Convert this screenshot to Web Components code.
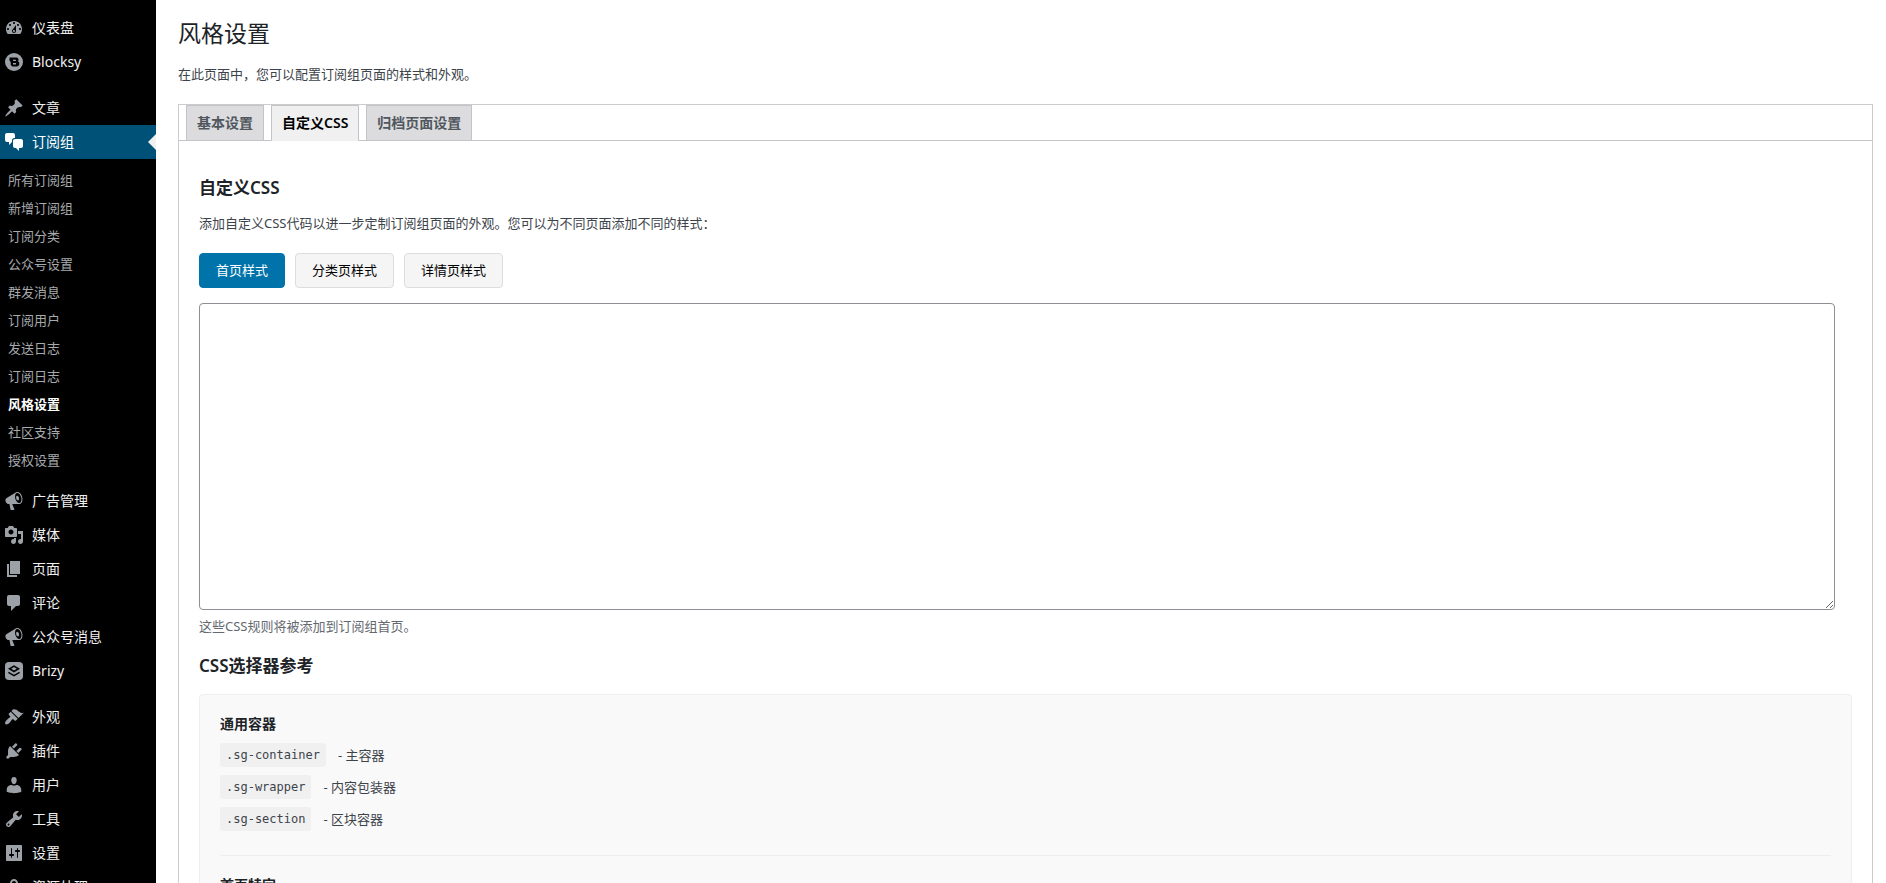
<!DOCTYPE html>
<html lang="zh-CN">
<head>
<meta charset="utf-8">
<title>风格设置</title>
<style>
  body {
    margin: 0;
    background: #fff;
    color: #3c434a;
    font: 13px/20px "Noto Sans", "Noto Sans CJK SC", sans-serif;
  }
</style>
</head>
<body>
<admin-shell>
  <admin-menu slot="menu">
    <menu-item icon="dashboard">仪表盘</menu-item>
    <menu-item icon="blocksy">Blocksy</menu-item>
    <menu-item icon="pin" separated>文章</menu-item>
    <menu-item icon="chat" current>订阅组</menu-item>
    <sub-menu>
      <sub-item>所有订阅组</sub-item>
      <sub-item>新增订阅组</sub-item>
      <sub-item>订阅分类</sub-item>
      <sub-item>公众号设置</sub-item>
      <sub-item>群发消息</sub-item>
      <sub-item>订阅用户</sub-item>
      <sub-item>发送日志</sub-item>
      <sub-item>订阅日志</sub-item>
      <sub-item current>风格设置</sub-item>
      <sub-item>社区支持</sub-item>
      <sub-item>授权设置</sub-item>
    </sub-menu>
    <menu-item icon="megaphone">广告管理</menu-item>
    <menu-item icon="media">媒体</menu-item>
    <menu-item icon="page">页面</menu-item>
    <menu-item icon="comment">评论</menu-item>
    <menu-item icon="megaphone">公众号消息</menu-item>
    <menu-item icon="brizy">Brizy</menu-item>
    <menu-item icon="brush" separated>外观</menu-item>
    <menu-item icon="plug">插件</menu-item>
    <menu-item icon="user">用户</menu-item>
    <menu-item icon="wrench">工具</menu-item>
    <menu-item icon="sliders">设置</menu-item>
    <menu-item icon="lock">资源处理</menu-item>
  </admin-menu>

  <page-header heading="风格设置">在此页面中，您可以配置订阅组页面的样式和外观。</page-header>

  <tab-panel>
    <nav-tab slot="tabs">基本设置</nav-tab>
    <nav-tab slot="tabs" current>自定义CSS</nav-tab>
    <nav-tab slot="tabs">归档页面设置</nav-tab>

    <css-editor heading="自定义CSS" hint="这些CSS规则将被添加到订阅组首页。">
      添加自定义CSS代码以进一步定制订阅组页面的外观。您可以为不同页面添加不同的样式：
      <style-button slot="buttons" current>首页样式</style-button>
      <style-button slot="buttons">分类页样式</style-button>
      <style-button slot="buttons">详情页样式</style-button>
    </css-editor>

    <selector-reference heading="CSS选择器参考">
      <selector-group heading="通用容器">
        <selector-row code=".sg-container">主容器</selector-row>
        <selector-row code=".sg-wrapper">内容包装器</selector-row>
        <selector-row code=".sg-section">区块容器</selector-row>
      </selector-group>
      <selector-group heading="首页特定"></selector-group>
    </selector-reference>
  </tab-panel>
</admin-shell>

<script>
const icons = {
  dashboard: '<path d="M3.76 16h12.48c1.1-1.37 1.76-3.11 1.76-5 0-4.42-3.58-8-8-8s-8 3.58-8 8c0 1.89.66 3.63 1.76 5zM10 4c.55 0 1 .45 1 1s-.45 1-1 1-1-.45-1-1 .45-1 1-1zM6 6c.55 0 1 .45 1 1s-.45 1-1 1-1-.45-1-1 .45-1 1-1zm8 0c.55 0 1 .45 1 1s-.45 1-1 1-1-.45-1-1 .45-1 1-1zm-5.37 5.55L12 7v6c0 1.1-.9 2-2 2s-2-.9-2-2c0-.57.24-1.08.63-1.45zM4 10c.55 0 1 .45 1 1s-.45 1-1 1-1-.45-1-1 .45-1 1-1zm12 0c.55 0 1 .45 1 1s-.45 1-1 1-1-.45-1-1 .45-1 1-1zm-5 3c0-.55-.45-1-1-1s-1 .45-1 1 .45 1 1 1 1-.45 1-1z"/>',
  blocksy: '<circle cx="10" cy="10" r="9"/><path fill="#000" fill-rule="evenodd" d="M5.500 5.500h6.700a2.300 2.300 0 0 1 1.800 3.800 2.800 2.800 0 0 1-1.300 5.200H8.300L6.700 13v-3L5.500 8.600zM9 7.700v1.400h2.900V7.700zm0 3.200v1.500h3v-1.500z"/>',
  pin: '<path d="M10.44 3.02l1.82-1.82 6.36 6.35-1.83 1.82c-1.05-.68-2.48-.57-3.41.36l-.75.75c-.92.93-1.04 2.35-.35 3.41l-1.83 1.82-2.41-2.41-2.8 2.79c-.42.42-3.38 2.71-3.8 2.29s1.86-3.39 2.28-3.81l2.79-2.79L4.1 9.36l1.83-1.82c1.05.69 2.48.57 3.4-.36l.75-.75c.93-.92 1.05-2.35.36-3.41z"/>',
  chat: '<path d="M11 6h-.82C9.07 6 8 7.2 8 8.16V10l-3 3v-3H3c-1.1 0-2-.9-2-2V3c0-1.1.9-2 2-2h6c1.1 0 2 .9 2 2v3zm0 1h6c1.1 0 2 .9 2 2v5c0 1.1-.9 2-2 2h-2v3l-3-3h-1c-1.1 0-2-.9-2-2V9c0-1.1.9-2 2-2z"/>',
  megaphone: '<path d="M18.15 5.94c.46 1.62.38 3.22-.02 4.48-.42 1.28-1.26 2.18-2.3 2.48-.16.06-.26.06-.4.06-.06.02-.12.02-.18.02-.06.02-.14.02-.22.02h-6.8l2.22 5.5c.02.14-.06.26-.14.34-.08.1-.24.16-.34.16H6.95c-.1 0-.26-.06-.34-.16-.08-.08-.16-.2-.14-.34l-1-5.5H4.25l-.02-.02c-.5.06-1.08-.18-1.54-.62s-.88-1.08-1.06-1.88c-.24-.8-.2-1.56-.02-2.2.18-.62.58-1.08 1.06-1.3l.02-.02 9-5.4c.1-.06.18-.1.24-.16.06-.04.14-.08.24-.12.16-.08.28-.12.5-.18 1.04-.3 2.24.1 3.22.98s1.84 2.24 2.26 3.86zm-2.58 5.98h-.02c.4-.1.74-.34 1.04-.7.58-.7.86-1.76.86-3.04 0-.64-.1-1.3-.28-1.98-.34-1.36-1.02-2.5-1.78-3.24s-1.68-1.1-2.46-.88c-.82.22-1.4.96-1.7 2-.32 1.04-.28 2.36.06 3.72.38 1.36 1 2.5 1.8 3.24.78.74 1.62 1.1 2.48.88zm-2.54-7.08c.22-.04.42-.02.62.04.38.16.76.48 1.02 1s.42 1.2.42 1.78c0 .3-.04.56-.12.8-.18.48-.44.84-.86.94-.34.1-.8-.06-1.14-.4s-.64-.86-.78-1.5c-.18-.62-.12-1.24.02-1.72s.48-.84.82-.94z"/>',
  media: '<path d="M13 11V4c0-.55-.45-1-1-1h-1.67L9 1H5L3.67 3H2c-.55 0-1 .45-1 1v7c0 .55.45 1 1 1h10c.55 0 1-.45 1-1zM7 4.5c1.38 0 2.5 1.12 2.5 2.5S8.38 9.5 7 9.5 4.5 8.38 4.5 7 5.62 4.5 7 4.5zM14 6h5v10.5c0 1.38-1.12 2.5-2.5 2.5S14 17.88 14 16.5s1.12-2.5 2.5-2.5c.17 0 .34.02.5.05V9h-3V6zm-4 8.05V13h2v3.5c0 1.38-1.12 2.5-2.5 2.5S7 17.88 7 16.5 8.12 14 9.5 14c.17 0 .34.02.5.05z"/>',
  page: '<path d="M6 15V2h10v13H6zm-1 1h8v2H3V5h2v11z"/>',
  comment: '<path d="M5 2h9c1.1 0 2 .9 2 2v7c0 1.1-.9 2-2 2h-2l-5 5v-5H5c-1.1 0-2-.9-2-2V4c0-1.1.9-2 2-2z"/>',
  brizy: '<rect x="1" y="1" width="18" height="18" rx="4"/><path fill="#000" fill-rule="evenodd" d="M10 4.200l6 3.600-6 3.600-6-3.600zm0 1.900L7.200 7.800 10 9.500l2.800-1.700z"/><path fill="none" stroke="#000" stroke-width="1.500" d="M4.400 11.400L10 14.700l5.600-3.300"/>',
  brush: '<path d="M14.48 11.06L7.41 3.99l1.5-1.5c.5-.56 2.3-.47 3.51.32 1.21.8 1.43 1.28 2.91 2.1 1.18.64 2.45 1.26 4.45.85zm-.71.71L6.7 4.7 4.93 6.47c-.39.39-.39 1.02 0 1.41l1.06 1.06c.39.39.39 1.03 0 1.42-.6.6-1.43 1.11-2.21 1.69-.35.26-.7.53-1.01.84C1.43 14.23.4 16.08 1.4 17.07c.99 1 2.84-.03 4.18-1.36.31-.31.58-.66.85-1.02.57-.78 1.08-1.61 1.69-2.21.39-.39 1.02-.39 1.41 0l1.06 1.06c.39.39 1.02.39 1.41 0z"/>',
  plug: '<path d="M13.11 4.36L9.87 7.6 8 5.73l3.24-3.24c.35-.34 1.05-.2 1.56.32.52.51.66 1.21.31 1.55zm-8 1.77l.91-1.12 9.01 9.01-1.19.84c-.71.71-2.63 1.16-3.82 1.16H6.14L4.9 17.26c-.59.59-1.54.59-2.12 0-.59-.58-.59-1.53 0-2.12l1.24-1.24v-3.88c0-1.13.4-3.19 1.09-3.89zm7.26 3.97l3.24-3.24c.34-.35 1.04-.21 1.55.31.52.51.66 1.21.31 1.55l-3.24 3.25z"/>',
  user: '<path d="M10 9.25c-2.27 0-2.73-3.44-2.73-3.44C7 4.02 7.82 2 9.97 2c2.16 0 2.98 2.02 2.71 3.81 0 0-.41 3.44-2.68 3.44zm0 1.6L12.72 10c2.39 0 4.52 2.33 4.52 4.53v2.49s-3.65 1.13-7.24 1.13c-3.65 0-7.24-1.13-7.24-1.13v-2.49c0-2.25 1.94-4.48 4.47-4.48z"/>',
  wrench: '<path d="M16.68 9.77c-1.34 1.34-3.3 1.67-4.95.99l-5.41 6.52c-.99.99-2.59.99-3.58 0s-.99-2.59 0-3.57l6.52-5.42c-.68-1.65-.35-3.61.99-4.95 1.28-1.28 3.12-1.62 4.72-1.06l-2.89 2.89 2.82 2.82 2.86-2.87c.53 1.58.18 3.39-1.08 4.65zM3.81 16.21c.4.39 1.04.39 1.43 0 .4-.4.4-1.04 0-1.43-.39-.4-1.03-.4-1.43 0-.39.39-.39 1.03 0 1.43z"/>',
  sliders: '<path fill-rule="evenodd" d="M18 17V3c0-.6-.4-1-1-1H3c-.6 0-1 .4-1 1v14c0 .6.4 1 1 1h14c.6 0 1-.4 1-1zM8 11h1c.55 0 1 .45 1 1s-.45 1-1 1H8v1.5c0 .28-.22.5-.5.5s-.5-.22-.5-.5V13H6c-.55 0-1-.45-1-1s.45-1 1-1h1V5.5c0-.28.22-.5.5-.5s.5.22.5.5V11zm5-2h-1c-.55 0-1-.45-1-1s.45-1 1-1h1V5.5c0-.28.22-.5.5-.5s.5.22.5.5V7h1c.55 0 1 .45 1 1s-.45 1-1 1h-1v5.5c0 .28-.22.5-.5.5s-.5-.22-.5-.5V9z"/>',
  lock: '<path d="M14 9h1c.55 0 1 .45 1 1v7c0 .55-.45 1-1 1H5c-.55 0-1-.45-1-1v-7c0-.55.45-1 1-1h1V6c0-2.21 1.79-4 4-4s4 1.79 4 4v3zm-2 0V6c0-1.1-.9-2-2-2s-2 .9-2 2v3h4z"/>'
}

// render(host) gives the shadow markup, read once from the host's attributes
function define (name, style, render) {
  customElements.define(name, class extends HTMLElement {
    constructor () {
      super()
      this.attachShadow({ mode: 'open' })
      this.shadowRoot.innerHTML = `<style>${style}</style>${render(this)}`
    }
  })
}

define('admin-shell', /* css */ `
  :host {
    display: flex;
    height: 100vh;
    overflow: hidden;
  }

  main {
    flex: 1;
    min-width: 0;
    padding: 17px 13px 0 22px;
  }
`, () => /* html */ `
  <slot name="menu"></slot>
  <main><slot></slot></main>
`)

define('admin-menu', /* css */ `
  :host {
    display: block;
    flex: none;
    width: 156px;
    background: #000;
  }

  nav {
    display: flex;
    flex-direction: column;
    padding-top: 11px;
  }
`, () => '<nav><slot></slot></nav>')

define('menu-item', /* css */ `
  :host {
    display: block;
    font-size: 14px;
  }

  :host([separated]) {
    margin-top: 12px;
  }

  a {
    position: relative;
    display: flex;
    align-items: center;
    gap: 8px;
    height: 34px;
    padding-left: 4px;
    color: #f0f0f1;
    text-decoration: none;
  }

  svg {
    flex: none;
    width: 20px;
    height: 20px;
    fill: #9ca1a7;
  }

  :host([current]) a {
    background: #005177;
    color: #fff;
  }

  :host([current]) svg {
    fill: #fff;
  }

  :host([current]) a::after {
    content: "";
    position: absolute;
    right: 0;
    border: 8px solid transparent;
    border-left-width: 0;
    border-right-color: #f0f0f1;
  }
`, host => /* html */ `
  <a href="#">
    <svg viewBox="0 0 20 20" aria-hidden="true">${icons[host.getAttribute('icon')]}</svg>
    <slot></slot>
  </a>
`)

define('sub-menu', /* css */ `
  :host {
    display: block;
    padding: 7px 0 10px;
  }
`, () => '<slot></slot>')

define('sub-item', /* css */ `
  :host {
    display: block;
  }

  a {
    display: block;
    padding: 5px 8px;
    color: #a7aaad;
    line-height: 18px;
    text-decoration: none;
  }

  :host([current]) a {
    color: #fff;
    font-weight: 600;
  }
`, () => '<a href="#"><slot></slot></a>')

define('page-header', /* css */ `
  :host {
    display: block;
    margin-bottom: 20px;
  }

  h1 {
    margin: 0 0 14px;
    color: #1d2327;
    font-size: 23px;
    font-weight: 400;
    line-height: 33px;
  }

  p {
    margin: 0;
  }
`, host => /* html */ `
  <h1>${host.getAttribute('heading')}</h1>
  <p><slot></slot></p>
`)

define('tab-panel', /* css */ `
  :host {
    display: block;
    border: 1px solid #ccc;
  }

  .tabs {
    display: flex;
    gap: 7px;
    padding: 0 7px;
    border-bottom: 1px solid #c3c4c7;
  }

  .content {
    padding: 35px 20px 20px;
  }
`, () => /* html */ `
  <nav class="tabs"><slot name="tabs"></slot></nav>
  <div class="content"><slot></slot></div>
`)

define('nav-tab', /* css */ `
  :host {
    display: block;
    font-size: 14px;
    font-weight: 600;
    line-height: 24px;
  }

  a {
    display: block;
    padding: 5px 10px;
    border: 1px solid #c3c4c7;
    border-bottom: 0;
    background: #dcdcde;
    color: #50575e;
    text-decoration: none;
  }

  :host([current]) a {
    margin-bottom: -1px;
    border-bottom: 1px solid #f0f0f1;
    background: #f0f0f1;
    color: #000;
  }
`, () => '<a href="#"><slot></slot></a>')

define('css-editor', /* css */ `
  :host {
    display: block;
  }

  h3 {
    margin: 0 0 13px;
    color: #1d2327;
    font-size: 17px;
    font-weight: 600;
    line-height: 24px;
  }

  p {
    margin: 0;
  }

  .buttons {
    display: flex;
    gap: 10px;
    margin: 20px 0 15px;
  }

  textarea {
    display: block;
    box-sizing: border-box;
    width: 99%;
    height: 307px;
    padding: 2px 6px;
    border: 1px solid #8c8f94;
    border-radius: 4px;
    background: #fff;
    font: 13px/18px "DejaVu Sans Mono", monospace;
  }

  .hint {
    margin-top: 6px;
    color: #646970;
  }
`, host => /* html */ `
  <h3>${host.getAttribute('heading')}</h3>
  <p><slot></slot></p>
  <div class="buttons"><slot name="buttons"></slot></div>
  <textarea aria-label="${host.getAttribute('heading')}" aria-describedby="hint" spellcheck="false"></textarea>
  <p class="hint" id="hint">${host.getAttribute('hint')}</p>
`)

define('style-button', /* css */ `
  :host {
    display: block;
  }

  button {
    display: block;
    padding: 8px 16px;
    border: 1px solid #ddd;
    border-radius: 4px;
    background: #f5f5f5;
    color: #000;
    font: inherit;
    line-height: 17px;
    cursor: pointer;
  }

  :host([current]) button {
    border-color: #0073aa;
    background: #0073aa;
    color: #fff;
  }
`, () => '<button type="button"><slot></slot></button>')

define('selector-reference', /* css */ `
  :host {
    display: block;
    margin-top: 18px;
  }

  h3 {
    margin: 0 0 16px;
    color: #1d2327;
    font-size: 17px;
    font-weight: 600;
    line-height: 24px;
  }

  .box {
    padding: 20px;
    border: 1px solid #eee;
    border-radius: 4px;
    background: #f9f9f9;
  }
`, host => /* html */ `
  <h3>${host.getAttribute('heading')}</h3>
  <div class="box"><slot></slot></div>
`)

define('selector-group', /* css */ `
  :host {
    display: block;
    margin-bottom: 20px;
    padding-bottom: 24px;
    border-bottom: 1px solid #eee;
  }

  :host(:last-child) {
    margin-bottom: 0;
    border-bottom: 0;
  }

  h4 {
    margin: 0 0 10px;
    color: #1d2327;
    font-size: 14px;
    font-weight: 600;
    line-height: 18px;
  }

  ul {
    display: flex;
    flex-direction: column;
    gap: 8px;
    margin: 0;
    padding: 0;
  }
`, host => /* html */ `
  <h4>${host.getAttribute('heading')}</h4>
  <ul><slot></slot></ul>
`)

define('selector-row', /* css */ `
  :host {
    display: list-item;
    list-style: none;
  }

  div {
    display: flex;
    align-items: center;
    gap: 12px;
  }

  code {
    padding: 3px 6px;
    border-radius: 3px;
    background: #f0f0f1;
    font: 12px/18px "DejaVu Sans Mono", monospace;
  }
`, host => /* html */ `
  <div><code>${host.getAttribute('code')}</code><span>- <slot></slot></span></div>
`)
</script>
</body>
</html>
